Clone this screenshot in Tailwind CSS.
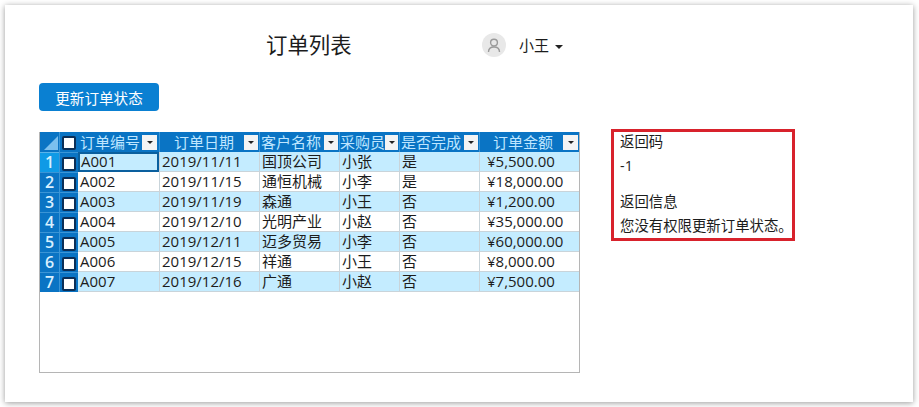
<!DOCTYPE html>
<html lang="zh-CN">
<head>
  <meta charset="UTF-8">
  <meta name="viewport" content="width=device-width, initial-scale=1.0">
  <title>订单列表</title>
  <script src="https://cdn.jsdelivr.net/npm/@tailwindcss/browser@4"></script>
</head>
<body class="bg-white w-[919px] h-[407px] overflow-hidden pt-[5px] pl-[5px] font-['Open_Sans','Noto_Sans_CJK_SC',sans-serif] text-[#1c1c1c]">
  <div class="w-[908px] h-[397px] bg-white shadow-[0_1px_6px_rgba(0,0,0,0.4)] pl-[34px]">
    <!-- header -->
    <div class="flex items-center h-[78px] pt-[2px]">
      <h1 class="ml-[227px] w-[216px] text-[21.4px] leading-[30px] font-normal">订单列表</h1>
      <div class="w-6 h-6 rounded-full bg-[#e8e8e8] flex items-center justify-center">
        <svg width="14" height="15" viewBox="0 0 14 15" fill="none" stroke="#9a9a9a" stroke-width="1.4"><circle cx="7" cy="4.6" r="3.4"/><path d="M1.5 14c0-3 2-5 5.5-5s5.5 2 5.5 5"/></svg>
      </div>
      <span class="ml-[13px] text-[15px] leading-5 text-[#1c1c1c]">小王</span>
      <span class="ml-[6px] mt-[3px] w-0 h-0 border-x-4 border-x-transparent border-t-4 border-t-[#222]"></span>
    </div>
    <button class="block w-[120px] h-[28px] rounded-[4px] bg-[#0a80d2] text-white text-[14.6px] leading-[30px]">更新订单状态</button>

    <div class="flex mt-[21px] items-start">
      <!-- grid -->
      <div class="w-[541px] h-[241px] border border-[#b5b5b5] border-t-0 text-[15px] leading-[18px]">
        <div class="grid grid-cols-[19px_19px_81px_100px_80px_60px_80px_100px] grid-rows-[20px] auto-rows-[20px]">
          <!-- head -->
          <div class="bg-[#0a74c4] flex items-end justify-end pr-[1px] pb-[2px]"><span class="w-0 h-0 border-l-[14px] border-l-transparent border-b-[14px] border-b-[#7cc0ee]"></span></div>
          <div class="bg-[#0a74c4] flex items-center justify-center border-l border-[#3b95d6] pt-[1px]"><span class="w-[14px] h-[14px] bg-white rounded-[2px] border-2 border-[#0b2f57]"></span></div>
          <div class="bg-[#0a74c4] text-[#bfe6ff] pl-[2px] flex items-center justify-between pr-[2px]">订单编号<span class="w-[15px] h-[15px] bg-[#f4f4f4] flex items-center justify-center"><i class="w-0 h-0 border-x-[3px] border-x-transparent border-t-[3px] border-t-[#222]"></i></span></div>
          <div class="bg-[#0a74c4] text-[#bfe6ff] border-l border-[#3b95d6] pl-[14px] flex items-center justify-between pr-[1px]">订单日期<span class="w-[14px] h-[15px] bg-[#f4f4f4] flex items-center justify-center"><i class="w-0 h-0 border-x-[3px] border-x-transparent border-t-[3px] border-t-[#222]"></i></span></div>
          <div class="bg-[#0a74c4] text-[#bfe6ff] border-l border-[#3b95d6] pl-[1px] flex items-center justify-between pr-[1px]">客户名称<span class="w-[14px] h-[15px] bg-[#f4f4f4] flex items-center justify-center"><i class="w-0 h-0 border-x-[3px] border-x-transparent border-t-[3px] border-t-[#222]"></i></span></div>
          <div class="bg-[#0a74c4] text-[#bfe6ff] border-l border-[#3b95d6] flex items-center justify-between pr-[1px] whitespace-nowrap">采购员<span class="w-[14px] h-[15px] bg-[#f4f4f4] flex items-center justify-center"><i class="w-0 h-0 border-x-[3px] border-x-transparent border-t-[3px] border-t-[#222]"></i></span></div>
          <div class="bg-[#0a74c4] text-[#bfe6ff] border-l border-[#3b95d6] pl-[1px] flex items-center justify-between pr-[1px]">是否完成<span class="w-[14px] h-[15px] bg-[#f4f4f4] flex items-center justify-center"><i class="w-0 h-0 border-x-[3px] border-x-transparent border-t-[3px] border-t-[#222]"></i></span></div>
          <div class="bg-[#0a74c4] text-[#bfe6ff] border-l border-[#3b95d6] pl-[13px] flex items-center justify-between pr-[1px]">订单金额<span class="w-[15px] h-[15px] bg-[#f4f4f4] flex items-center justify-center"><i class="w-0 h-0 border-x-[3px] border-x-transparent border-t-[3px] border-t-[#222]"></i></span></div>

          <!-- row 1 -->
          <div class="bg-[#0f9ae6] text-[#d8f0ff] text-center text-[16px] font-semibold border-t border-[#5ab4ea]">1</div>
          <div class="bg-[#0a74c4] flex items-center justify-center border-l border-t border-[#3b95d6] pt-[3px]"><span class="w-[14px] h-[14px] bg-white rounded-[2px] border-2 border-[#0b2f57]"></span></div>
          <div class="bg-[#c4ecff] pl-[1px] border-2 border-[#0a5f9e] leading-[14px]">A001</div>
          <div class="bg-[#c4ecff] pl-[2px] border-l border-b border-[#c9d4da]">2019/11/11</div>
          <div class="bg-[#c4ecff] pl-[2px] border-l border-b border-[#c9d4da]">国顶公司</div>
          <div class="bg-[#c4ecff] pl-[2px] border-l border-b border-[#c9d4da]">小张</div>
          <div class="bg-[#c4ecff] pl-[2px] border-l border-b border-[#c9d4da]">是</div>
          <div class="bg-[#c4ecff] pl-[7px] border-l border-b border-[#c9d4da]">¥5,500.00</div>

          <!-- row 2 -->
          <div class="bg-[#0a74c4] text-[#d8f0ff] text-center text-[16px] font-semibold border-t border-[#3b95d6]">2</div>
          <div class="bg-[#0a74c4] flex items-center justify-center border-l border-t border-[#3b95d6] pt-[3px]"><span class="w-[14px] h-[14px] bg-white rounded-[2px] border-2 border-[#0b2f57]"></span></div>
          <div class="bg-white pl-[2px] border-b border-[#c9d4da]">A002</div>
          <div class="bg-white pl-[2px] border-l border-b border-[#c9d4da]">2019/11/15</div>
          <div class="bg-white pl-[2px] border-l border-b border-[#c9d4da]">通恒机械</div>
          <div class="bg-white pl-[2px] border-l border-b border-[#c9d4da]">小李</div>
          <div class="bg-white pl-[2px] border-l border-b border-[#c9d4da]">是</div>
          <div class="bg-white pl-[7px] border-l border-b border-[#c9d4da]">¥18,000.00</div>

          <!-- row 3 -->
          <div class="bg-[#0a74c4] text-[#d8f0ff] text-center text-[16px] font-semibold border-t border-[#3b95d6]">3</div>
          <div class="bg-[#0a74c4] flex items-center justify-center border-l border-t border-[#3b95d6] pt-[3px]"><span class="w-[14px] h-[14px] bg-white rounded-[2px] border-2 border-[#0b2f57]"></span></div>
          <div class="bg-[#c4ecff] pl-[2px] border-b border-[#c9d4da]">A003</div>
          <div class="bg-[#c4ecff] pl-[2px] border-l border-b border-[#c9d4da]">2019/11/19</div>
          <div class="bg-[#c4ecff] pl-[2px] border-l border-b border-[#c9d4da]">森通</div>
          <div class="bg-[#c4ecff] pl-[2px] border-l border-b border-[#c9d4da]">小王</div>
          <div class="bg-[#c4ecff] pl-[2px] border-l border-b border-[#c9d4da]">否</div>
          <div class="bg-[#c4ecff] pl-[7px] border-l border-b border-[#c9d4da]">¥1,200.00</div>

          <!-- row 4 -->
          <div class="bg-[#0a74c4] text-[#d8f0ff] text-center text-[16px] font-semibold border-t border-[#3b95d6]">4</div>
          <div class="bg-[#0a74c4] flex items-center justify-center border-l border-t border-[#3b95d6] pt-[3px]"><span class="w-[14px] h-[14px] bg-white rounded-[2px] border-2 border-[#0b2f57]"></span></div>
          <div class="bg-white pl-[2px] border-b border-[#c9d4da]">A004</div>
          <div class="bg-white pl-[2px] border-l border-b border-[#c9d4da]">2019/12/10</div>
          <div class="bg-white pl-[2px] border-l border-b border-[#c9d4da]">光明产业</div>
          <div class="bg-white pl-[2px] border-l border-b border-[#c9d4da]">小赵</div>
          <div class="bg-white pl-[2px] border-l border-b border-[#c9d4da]">否</div>
          <div class="bg-white pl-[7px] border-l border-b border-[#c9d4da]">¥35,000.00</div>

          <!-- row 5 -->
          <div class="bg-[#0a74c4] text-[#d8f0ff] text-center text-[16px] font-semibold border-t border-[#3b95d6]">5</div>
          <div class="bg-[#0a74c4] flex items-center justify-center border-l border-t border-[#3b95d6] pt-[3px]"><span class="w-[14px] h-[14px] bg-white rounded-[2px] border-2 border-[#0b2f57]"></span></div>
          <div class="bg-[#c4ecff] pl-[2px] border-b border-[#c9d4da]">A005</div>
          <div class="bg-[#c4ecff] pl-[2px] border-l border-b border-[#c9d4da]">2019/12/11</div>
          <div class="bg-[#c4ecff] pl-[2px] border-l border-b border-[#c9d4da]">迈多贸易</div>
          <div class="bg-[#c4ecff] pl-[2px] border-l border-b border-[#c9d4da]">小李</div>
          <div class="bg-[#c4ecff] pl-[2px] border-l border-b border-[#c9d4da]">否</div>
          <div class="bg-[#c4ecff] pl-[7px] border-l border-b border-[#c9d4da]">¥60,000.00</div>

          <!-- row 6 -->
          <div class="bg-[#0a74c4] text-[#d8f0ff] text-center text-[16px] font-semibold border-t border-[#3b95d6]">6</div>
          <div class="bg-[#0a74c4] flex items-center justify-center border-l border-t border-[#3b95d6] pt-[3px]"><span class="w-[14px] h-[14px] bg-white rounded-[2px] border-2 border-[#0b2f57]"></span></div>
          <div class="bg-white pl-[2px] border-b border-[#c9d4da]">A006</div>
          <div class="bg-white pl-[2px] border-l border-b border-[#c9d4da]">2019/12/15</div>
          <div class="bg-white pl-[2px] border-l border-b border-[#c9d4da]">祥通</div>
          <div class="bg-white pl-[2px] border-l border-b border-[#c9d4da]">小王</div>
          <div class="bg-white pl-[2px] border-l border-b border-[#c9d4da]">否</div>
          <div class="bg-white pl-[7px] border-l border-b border-[#c9d4da]">¥8,000.00</div>

          <!-- row 7 -->
          <div class="bg-[#0a74c4] text-[#d8f0ff] text-center text-[16px] font-semibold border-t border-[#3b95d6]">7</div>
          <div class="bg-[#0a74c4] flex items-center justify-center border-l border-t border-[#3b95d6] pt-[3px]"><span class="w-[14px] h-[14px] bg-white rounded-[2px] border-2 border-[#0b2f57]"></span></div>
          <div class="bg-[#c4ecff] pl-[2px] border-b border-[#c9d4da]">A007</div>
          <div class="bg-[#c4ecff] pl-[2px] border-l border-b border-[#c9d4da]">2019/12/16</div>
          <div class="bg-[#c4ecff] pl-[2px] border-l border-b border-[#c9d4da]">广通</div>
          <div class="bg-[#c4ecff] pl-[2px] border-l border-b border-[#c9d4da]">小赵</div>
          <div class="bg-[#c4ecff] pl-[2px] border-l border-b border-[#c9d4da]">否</div>
          <div class="bg-[#c4ecff] pl-[7px] border-l border-b border-[#c9d4da]">¥7,500.00</div>
        </div>
      </div>

      <!-- result panel -->
      <div class="ml-[31px] -mt-[3px] w-[184px] h-[112px] border-[3px] border-[#d8222c] pl-[6px] text-[14.4px] leading-6 whitespace-nowrap">
        <p class="-mt-[2px]">返回码</p>
        <p>-1</p>
        <p class="mt-3">返回信息</p>
        <p>您没有权限更新订单状态。</p>
      </div>
    </div>
  </div>
</body>
</html>
